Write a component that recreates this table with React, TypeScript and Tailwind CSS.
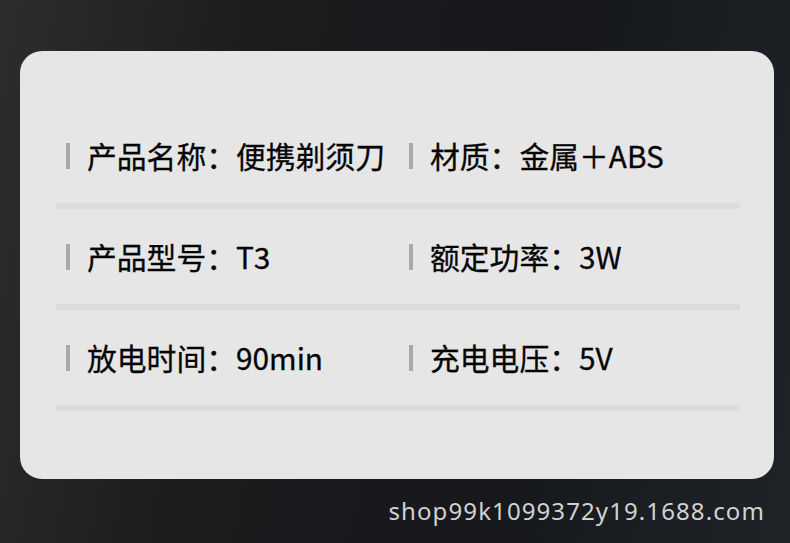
import React from "react";

const rows: [string, string][] = [
  ["产品名称：便携剃须刀", "材质：金属＋ABS"],
  ["产品型号：T3", "额定功率：3W"],
  ["放电时间：90min", "充电电压：5V"],
];

function Cell({ text }: { text: string }) {
  return (
    <div className="flex items-center">
      <div className="w-[4px] h-[26px] bg-[#a9a9a9]" />
      <span className="ml-[17px] text-[29.8px] leading-none font-normal text-[#050505] whitespace-nowrap [-webkit-text-stroke:0.3px_#050505]">
        {text}
      </span>
    </div>
  );
}

export default function App() {
  return (
    <div
      className="w-[790px] h-[543px] overflow-hidden bg-[linear-gradient(100deg,#2d2d2d_0%,#1b1c1e_30%,#16181b_65%,#1f2328_100%)] pt-[51px] pl-[20px] flex flex-col"
      style={{ fontFamily: '"Noto Sans CJK SC", "Noto Sans", sans-serif' }}
    >
      <div className="w-[754px] h-[428px] rounded-[22px] bg-[#e6e6e7] pt-[57px] pl-[36px] pr-[34px]">
        {rows.map(([a, b], i) => (
          <div key={i} className="flex flex-col">
            <div className="h-[95px] grid grid-cols-[343px_1fr] items-center pl-[10px] pt-[1px]">
              <Cell text={a} />
              <Cell text={b} />
            </div>
            <div className="h-[6px] bg-[#dcdcdc]" />
          </div>
        ))}
      </div>
      <div className="flex justify-end pr-[25px] mt-[20px]">
        <span
          className="text-[24px] leading-none text-[#d2d2d2] tracking-[1.1px]"
          style={{ fontFamily: '"Noto Sans", sans-serif' }}
        >
          shop99k1099372y19.1688.com
        </span>
      </div>
    </div>
  );
}
